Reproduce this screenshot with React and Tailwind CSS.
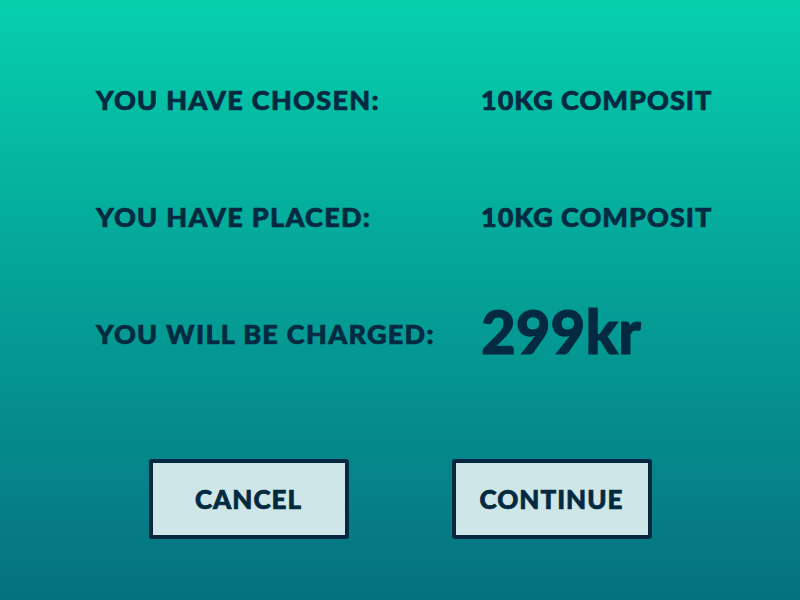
export default function App() {
  const rows = [
    { label: "YOU HAVE CHOSEN:", value: "10KG COMPOSIT" },
    { label: "YOU HAVE PLACED:", value: "10KG COMPOSIT" },
    { label: "YOU WILL BE CHARGED:", value: "299kr", big: true },
  ];

  return (
    <div
      className="w-[800px] h-[600px] bg-gradient-to-b from-[#07d0ad] to-[#06717f] text-[#032a40] flex flex-col"
      style={{ fontFamily: "Lato, 'Open Sans', sans-serif" }}
    >
      {/* Summary */}
      <div className="pl-[96px] pt-[77px] flex flex-col gap-[72px]">
        {rows.map((row) => (
          <div key={row.label} className="flex items-center h-[45px]">
            <div className="w-[385px] text-[27px] font-black tracking-[1.3px] leading-none [-webkit-text-stroke:0.7px_#032a40]">
              {row.label}
            </div>
            <div
              className={
                row.big
                  ? "text-[60px] font-black leading-none tracking-[0px] -mt-[6px] [-webkit-text-stroke:1px_#032a40]"
                  : "text-[27px] font-black leading-none tracking-[1px] [-webkit-text-stroke:0.7px_#032a40]"
              }
            >
              {row.value}
            </div>
          </div>
        ))}
      </div>

      {/* Actions */}
      <div className="mt-[103px] flex justify-center gap-[103px]">
        <button className="w-[200px] h-[80px] bg-[#cfe6e8] border-4 border-[#03283f] rounded-[3px] text-[26px] font-black tracking-[1px] [-webkit-text-stroke:0.7px_#032a40]">
          CANCEL
        </button>
        <button className="w-[200px] h-[80px] bg-[#cfe6e8] border-4 border-[#03283f] rounded-[3px] text-[26px] font-black tracking-[1px] [-webkit-text-stroke:0.7px_#032a40]">
          CONTINUE
        </button>
      </div>
    </div>
  );
}
